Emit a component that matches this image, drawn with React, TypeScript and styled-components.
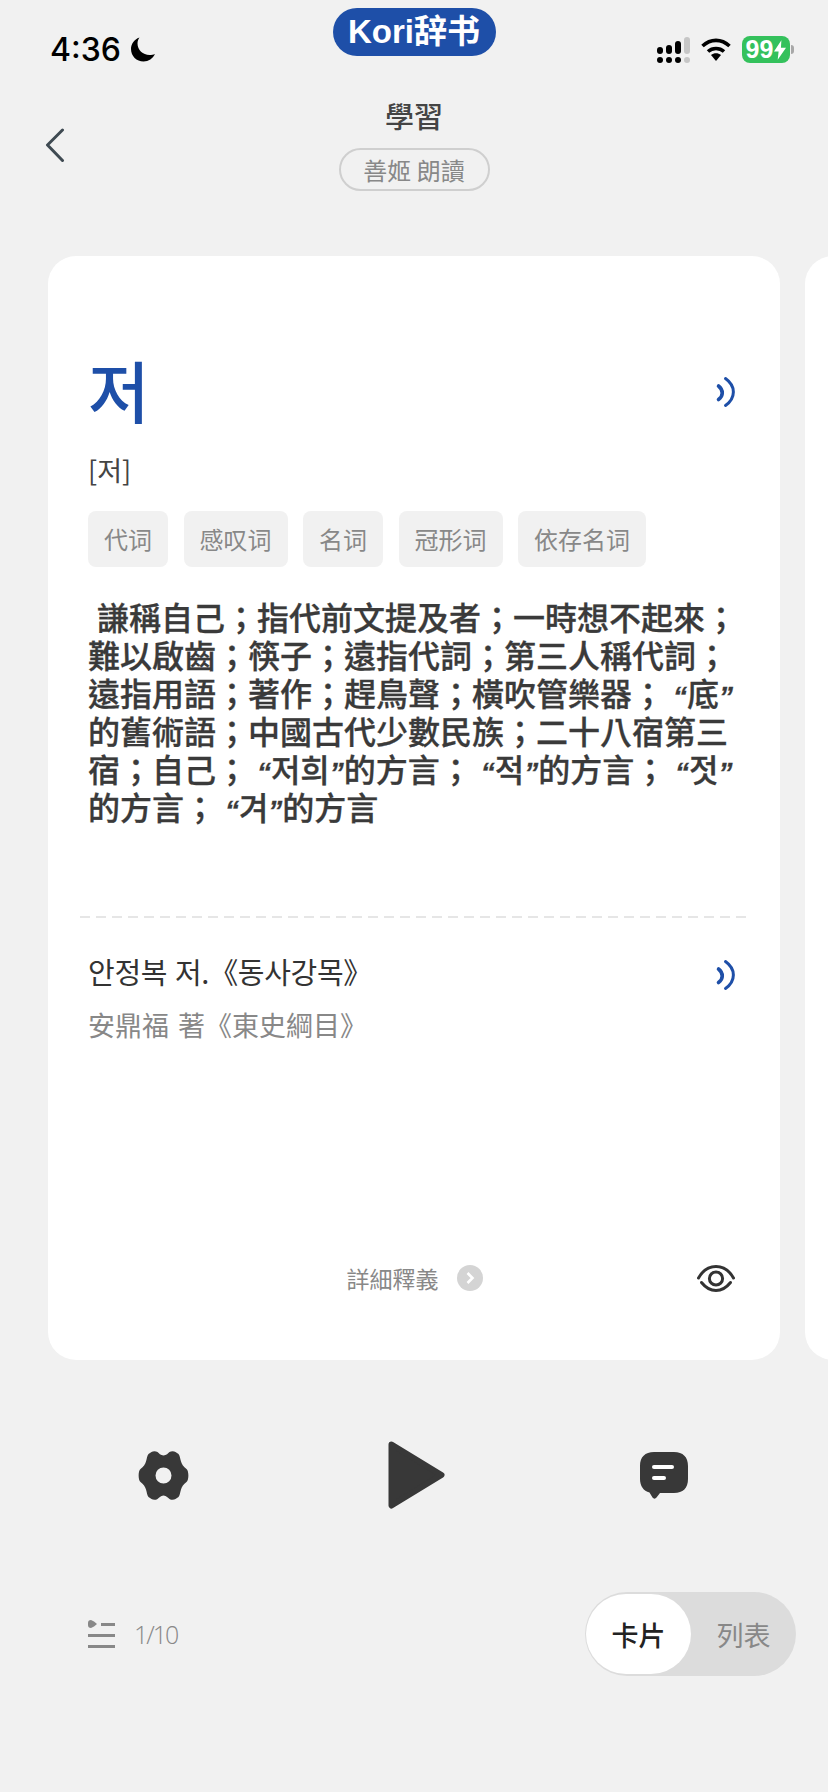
import React from "react";
import styled, { createGlobalStyle } from "styled-components";

const BLUE = "#1e4fa8";
const DARK = "#383838";
const TC = `"Noto Sans CJK TC", "Noto Sans CJK KR", "Liberation Sans", sans-serif`;
const SC = `"Noto Sans CJK SC", "Liberation Sans", sans-serif`;
const KR = `"Noto Sans CJK KR", "Noto Sans CJK TC", sans-serif`;

const tags = ["代词", "感叹词", "名词", "冠形词", "依存名词"];
const meaningLines = [
  "\u00a0謙稱自己；指代前文提及者；一時想不起來；",
  "難以啟齒；筷子；遠指代詞；第三人稱代詞；",
  "遠指用語；著作；趕鳥聲；橫吹管樂器； “底”",
  "的舊術語；中國古代少數民族；二十八宿第三",
  "宿；自己； “저희”的方言； “적”的方言； “젓”",
  "的方言； “겨”的方言",
];

const SpeakerIcon = () => (
  <SpeakerSvg viewBox="0 0 20 32">
    <path d="M10.500 2.500C21 10 21 22 10.500 29.500" strokeWidth="3" />
    <path d="M3.500 10C8.500 14 8.500 20 3.500 23.500" strokeWidth="3.600" />
  </SpeakerSvg>
);

export default function App() {
  return (
    <Page>
      <GlobalStyle />
      <StatusBar>
        <TimeGroup>
          <Time>4:36</Time>
          <svg width="26" height="25" viewBox="0 0 25 25">
            <path
              d="M9 .5C3.5 2.5.5 7 .5 12c0 7 5.500 12.500 12.500 12.500 5 0 9.500-3 11.500-7.500-1.500.7-3.500 1-5.500 1C12.500 18 7 13 7 6.500 7 4 7.800 2 9 .5Z"
              fill="#000"
            />
          </svg>
        </TimeGroup>
        <BrandPill>Kori辞书</BrandPill>
        <StatusIcons>
          <svg width="33" height="26" viewBox="0 0 33 26">
            <rect x="0" y="10" width="6" height="7" rx="3" />
            <rect x="9" y="8" width="6" height="9" rx="3" />
            <rect x="18" y="4" width="6" height="13" rx="3" />
            <rect x="27" y="0" width="6" height="17" rx="3" fill="#c6c6c6" />
            <rect x="0" y="20" width="6" height="6" rx="3" />
            <rect x="9" y="20" width="6" height="6" rx="3" />
            <rect x="18" y="20" width="6" height="6" rx="3" />
            <rect x="27" y="20" width="6" height="6" rx="3" fill="#c6c6c6" />
          </svg>
          <svg width="30" height="23" viewBox="0 0 30 23">
            <path d="M1.500 8C9.500.5 20.500.5 28.500 8" fill="none" stroke="#000" strokeWidth="3.600" />
            <path d="M7 13.500c4.500-4 11.500-4 16 0" fill="none" stroke="#000" strokeWidth="3.600" />
            <path d="M15 23l-5-6c3-2.500 7-2.500 10 0z" fill="#000" />
          </svg>
          <BatteryGroup>
            <Battery>
              99
              <svg width="12" height="20" viewBox="0 0 13 21">
                <path d="M8 0L0 12h5L4 21l9-13H7.500z" fill="#fff" />
              </svg>
            </Battery>
            <BatteryNub />
          </BatteryGroup>
        </StatusIcons>
      </StatusBar>

      <Nav>
        <BackButton width="20" height="35" viewBox="0 0 20 35">
          <path d="M17.500 2L2.500 17l15 15.500" />
        </BackButton>
        <NavCenter>
          <NavTitle>學習</NavTitle>
          <VoicePill>善姬 朗讀</VoicePill>
        </NavCenter>
      </Nav>

      <Carousel>
        <Card>
          <WordRow>
            <Headword>저</Headword>
            <SpeakerIcon />
          </WordRow>
          <Pronunciation>[저]</Pronunciation>
          <TagRow>
            {tags.map((tag) => (
              <Tag key={tag}>{tag}</Tag>
            ))}
          </TagRow>
          <Meaning lang="zh-Hant">
            {meaningLines.map((line) => (
              <MeaningLine key={line}>
                {line.split(/([“”])/).map((part, i) =>
                  part === "“" || part === "”" ? <Quote key={i}>{part}</Quote> : part
                )}
              </MeaningLine>
            ))}
          </Meaning>
          <Divider />
          <ExampleRow>
            <ExampleKo lang="ko">안정복 저.《동사강목》</ExampleKo>
            <SpeakerIcon />
          </ExampleRow>
          <ExampleZh lang="zh-Hant">安鼎福 著《東史綱目》</ExampleZh>
          <CardFooter>
            <DetailLink>
              詳細釋義
              <ChevronBadge>
                <svg width="10" height="14" viewBox="0 0 10 14">
                  <path d="M2.500 2l5 5-5 5" fill="none" stroke="#fff" strokeWidth="2.600" />
                </svg>
              </ChevronBadge>
            </DetailLink>
            <EyeIcon width="38" height="27" viewBox="0 0 38 27">
              <path d="M1.500 13C6 5 12 1.500 19 1.500S32 5 36.500 13" />
              <path d="M4.500 17.500c4 5 8.500 8 14.500 8s10.500-3 14.500-8" />
              <circle cx="19" cy="13.500" r="6.600" />
            </EyeIcon>
          </CardFooter>
        </Card>
        <NextCard />
      </Carousel>

      <Controls>
        <svg width="51" height="49" viewBox="0 0 51 49">
          <path
            fillRule="evenodd"
            fill={DARK}
            d="M25.500 4.500C28.500 4.500 30 2 31.500 1C33.500-.2 36 0 37.500 1L40.500 3C42 4.500 42 7.500 43 10.500C43.800 13.500 45.500 15.500 48.500 18C51 20 51 29 48.500 31C45.500 33.500 43.800 35.500 43 38.500C42 41.500 42 44.500 40.500 46L37.500 48C36 49 33.500 49.200 31.500 48C30 47 28.500 44.500 25.500 44.500C22.500 44.500 21 47 19.500 48C17.500 49.200 15 49 13.500 48L10.500 46C9 44.500 9 41.500 8 38.500C7.200 35.500 5.500 33.500 2.500 31C0 29 0 20 2.500 18C5.500 15.500 7.200 13.500 8 10.500C9 7.500 9 4.500 10.500 3L13.500 1C15 0 17.500-.2 19.500 1C21 2 22.500 4.500 25.500 4.500ZM25.500 16.500a8 8 0 1 0 0 16a8 8 0 1 0 0-16Z"
          />
        </svg>
        <PlayIcon width="57" height="68" viewBox="0 0 57 68">
          <path d="M3.500 3.500L53.500 34L3.500 64.500Z" fill={DARK} stroke={DARK} strokeWidth="6" strokeLinejoin="round" />
        </PlayIcon>
        <svg width="48" height="47" viewBox="0 0 48 47">
          <path
            fill={DARK}
            d="M14 0H34C43 0 48 5 48 14V27C48 36 43 41 34 41H20L16.500 45.500C15.500 47 13.500 47 12.500 45.500L9.500 40.500C3.500 39 0 34 0 27V14C0 5 5 0 14 0Z"
          />
          <rect x="12" y="13" width="22" height="4" rx="2" fill="#fff" />
          <rect x="12" y="24" width="14" height="4" rx="2" fill="#fff" />
        </svg>
      </Controls>

      <BottomRow>
        <Progress>
          <svg width="28" height="29" viewBox="0 0 28 29" fill="#888">
            <path d="M0 3a3 3 0 0 1 3-3l3 1.500L9 4 6 6.500 3 8a3 3 0 0 1-3-3z" />
            <rect x="13" y="3" width="14" height="3" />
            <rect x="0" y="14" width="27" height="3" />
            <rect x="0" y="25" width="27" height="3" />
          </svg>
          <ProgressText>1/10</ProgressText>
        </Progress>
        <ViewToggle>
          <ToggleOption $active>卡片</ToggleOption>
          <ToggleOption>列表</ToggleOption>
        </ViewToggle>
      </BottomRow>
    </Page>
  );
}

const GlobalStyle = createGlobalStyle`
  html, body {
    margin: 0;
    padding: 0;
    background: #f1f1f1;
  }
`;

const Page = styled.div`
  width: 828px;
  height: 1792px;
  overflow: hidden;
  background: #f1f1f1;
  font-family: ${TC};
`;

const StatusBar = styled.div`
  display: grid;
  grid-template-columns: 1fr auto 1fr;
  padding: 8px 34px 0;
  height: 97px;
  box-sizing: border-box;
`;

const TimeGroup = styled.div`
  display: flex;
  align-items: center;
  gap: 9px;
  height: 25px;
  margin: 29px 0 0 16px;
`;

const Time = styled.span`
  font-family: Inter, "Liberation Sans", sans-serif;
  font-size: 32px;
  font-weight: 500;
  color: #000;
`;

const BrandPill = styled.div`
  width: 163px;
  height: 48px;
  border-radius: 24px;
  background: ${BLUE};
  color: #fff;
  font-family: "Liberation Sans", ${SC};
  font-size: 33px;
  font-weight: 700;
  line-height: 48px;
  text-align: center;
`;

const StatusIcons = styled.div`
  justify-self: end;
  display: flex;
  align-items: center;
  gap: 11px;
  height: 27px;
  margin-top: 28px;
`;

const BatteryGroup = styled.div`
  display: flex;
  align-items: center;
  gap: 1px;
`;

const Battery = styled.div`
  width: 48px;
  height: 27px;
  border-radius: 8px;
  background: #34c15c;
  color: #fff;
  font-family: "Liberation Sans", sans-serif;
  font-size: 25px;
  font-weight: 700;
  display: flex;
  align-items: center;
  justify-content: center;
  gap: 1px;
`;

const BatteryNub = styled.div`
  width: 3px;
  height: 9px;
  border-radius: 0 3px 3px 0;
  background: #a8a8a8;
`;

const Nav = styled.div`
  position: relative;
  display: flex;
  justify-content: center;
`;

const BackButton = styled.svg`
  position: absolute;
  left: 45px;
  top: 31px;

  path {
    fill: none;
    stroke: #3f4a52;
    stroke-width: 3;
    stroke-linecap: round;
    stroke-linejoin: round;
  }
`;

const NavCenter = styled.div`
  display: flex;
  flex-direction: column;
  align-items: center;
`;

const NavTitle = styled.div`
  font-size: 29px;
  font-weight: 500;
  line-height: 36px;
  color: #444;
`;

const VoicePill = styled.div`
  width: 151px;
  height: 43px;
  margin-top: 15px;
  box-sizing: border-box;
  border: 2px solid #cfcfcf;
  border-radius: 22px;
  color: #888;
  font-size: 24px;
  line-height: 39px;
  text-align: center;
`;

const Carousel = styled.div`
  display: flex;
  gap: 25px;
  margin-top: 65px;
  padding-left: 48px;
`;

const Card = styled.div`
  flex: 0 0 732px;
  min-width: 0;
  height: 1104px;
  box-sizing: border-box;
  padding: 96px 46px 0 40px;
  border-radius: 28px;
  background: #fff;
  display: flex;
  flex-direction: column;
`;

const NextCard = styled.div`
  flex: 0 0 732px;
  height: 1104px;
  border-radius: 28px;
  background: #fff;
`;

const WordRow = styled.div`
  display: flex;
  justify-content: space-between;
  align-items: center;
  height: 80px;
`;

const Headword = styled.div`
  font-family: ${KR};
  font-size: 67px;
  font-weight: 500;
  line-height: 78px;
  margin-bottom: 6px;
  color: ${BLUE};
`;

const SpeakerSvg = styled.svg`
  width: 20px;
  height: 32px;
  margin-right: -1px;
  flex: none;

  path {
    fill: none;
    stroke: ${BLUE};
    stroke-linecap: round;
  }
`;

const Pronunciation = styled.div`
  margin-top: 21px;
  font-family: ${KR};
  font-size: 27px;
  line-height: 34px;
  color: #444;
`;

const TagRow = styled.div`
  display: flex;
  gap: 15.5px;
  margin-top: 24px;
`;

const Tag = styled.div`
  height: 56px;
  padding: 0 16px;
  border-radius: 8px;
  background: #f1f1f1;
  color: #888;
  font-family: ${SC};
  font-size: 24px;
  line-height: 56px;
`;

const Meaning = styled.div`
  margin-top: 33px;
  font-family: "Liberation Sans", ${TC};
  font-size: 32px;
  font-weight: 500;
  line-height: 38px;
  color: #3a3a3a;
  white-space: nowrap;
  -webkit-text-stroke: 0.3px #3a3a3a;
`;

const MeaningLine = styled.div`
  height: 38px;
`;

const Quote = styled.span`
  font-size: 28px;
  font-weight: 700;
  font-style: italic;
`;

const Divider = styled.div`
  margin: 88px -12px 0 -8px;
  height: 2px;
  background: repeating-linear-gradient(90deg, #e6e6e6 0 10px, transparent 10px 16px);
`;

const ExampleRow = styled.div`
  display: flex;
  justify-content: space-between;
  align-items: flex-start;
  height: 36px;
  margin-top: 35px;

  svg {
    margin-top: 6px;
  }
`;

const ExampleKo = styled.div`
  font-family: ${KR};
  font-size: 29px;
  line-height: 36px;
  letter-spacing: -0.3px;
  color: #333;
`;

const ExampleZh = styled.div`
  margin-top: 18px;
  font-size: 27px;
  line-height: 36px;
  word-spacing: 3px;
  color: #888;
`;

const CardFooter = styled.div`
  display: grid;
  grid-template-columns: 1fr auto 1fr;
  align-items: center;
  margin-top: 218px;
  height: 32px;
  padding-left: 7px;
`;

const DetailLink = styled.div`
  grid-column: 2;
  display: flex;
  align-items: center;
  gap: 18px;
  font-size: 23px;
  color: #888;
`;

const ChevronBadge = styled.div`
  width: 26px;
  height: 26px;
  border-radius: 50%;
  background: #d4d4d4;
  display: flex;
  align-items: center;
  justify-content: center;
`;

const EyeIcon = styled.svg`
  grid-column: 3;
  justify-self: end;
  margin-right: -1px;

  path,
  circle {
    fill: none;
    stroke: #333;
    stroke-width: 3;
    stroke-linecap: round;
  }
`;

const Controls = styled.div`
  display: flex;
  align-items: center;
  justify-content: space-between;
  height: 68px;
  margin-top: 81px;
  padding: 0 140px 0 138px;
`;

const PlayIcon = styled.svg`
  margin-left: 3px;
`;

const BottomRow = styled.div`
  display: flex;
  align-items: center;
  justify-content: space-between;
  margin-top: 83px;
  padding: 0 32px 0 88px;
`;

const Progress = styled.div`
  display: flex;
  align-items: center;
  gap: 18px;
`;

const ProgressText = styled.span`
  font-family: "Open Sans", "Liberation Sans", sans-serif;
  font-size: 25px;
  font-weight: 300;
  letter-spacing: -2px;
  color: #888;
`;

const ViewToggle = styled.div`
  width: 211px;
  height: 84px;
  box-sizing: border-box;
  padding: 2px 0 2px 1px;
  border-radius: 42px;
  background: #dcdcdc;
  display: flex;
  font-family: ${SC};
  font-size: 27px;
`;

const ToggleOption = styled.div<{ $active?: boolean }>`
  flex: 0 0 105px;
  height: 80px;
  box-sizing: border-box;
  border-radius: 40px;
  display: flex;
  align-items: center;
  justify-content: center;
  background: ${(p) => (p.$active ? "#fff" : "transparent")};
  color: ${(p) => (p.$active ? "#222" : "#888")};
  font-weight: ${(p) => (p.$active ? 500 : 400)};
`;
